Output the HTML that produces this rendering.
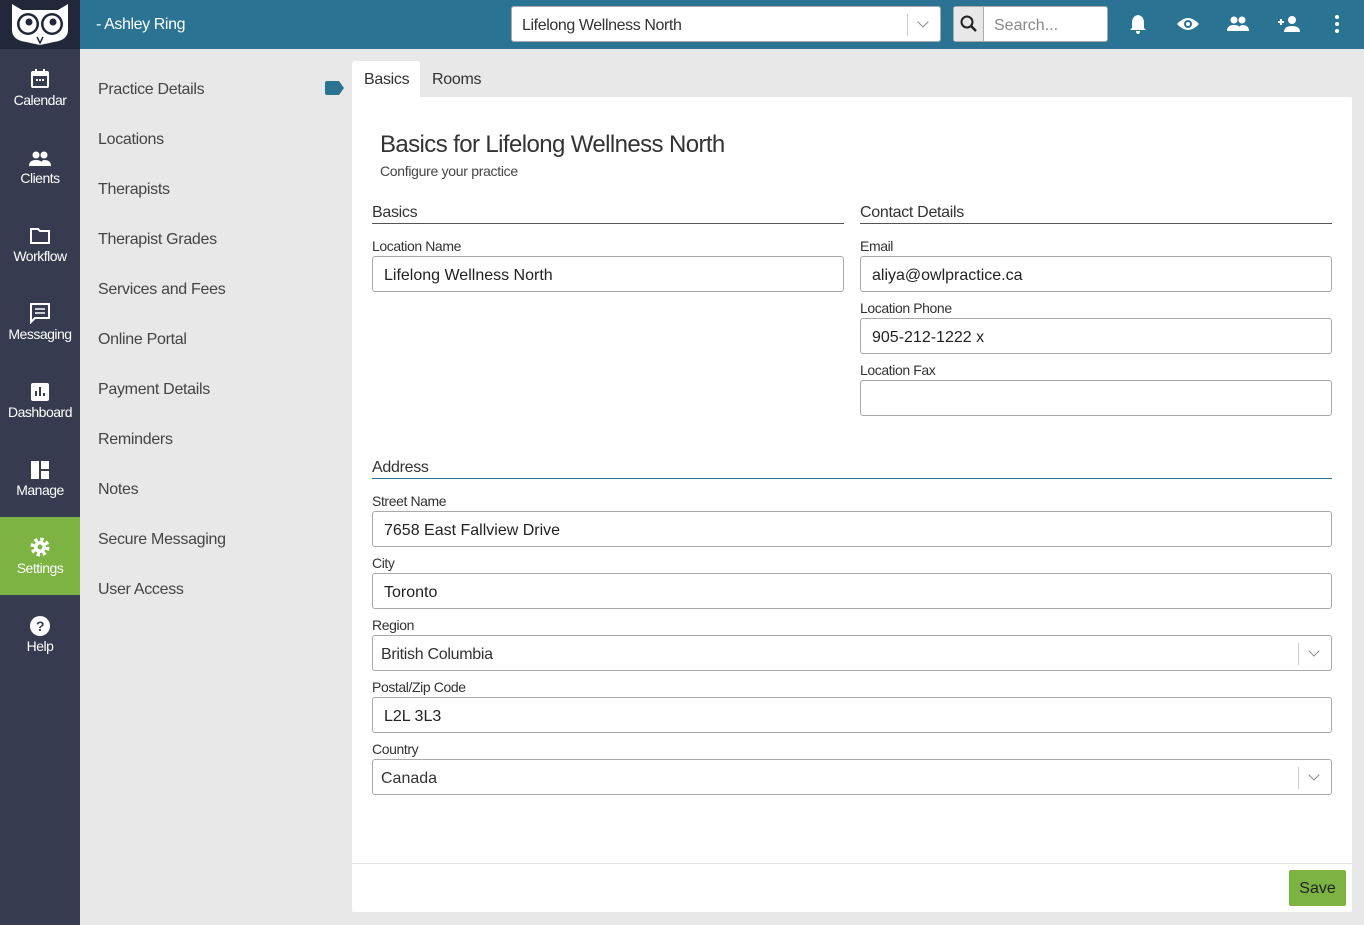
<!DOCTYPE html>
<html><head><meta charset="utf-8"><style>
*{box-sizing:border-box;margin:0;padding:0}
body{width:1364px;height:925px;background:#e8e8e8;font-family:"Liberation Sans",sans-serif;position:relative;overflow:hidden;color:#333}
.top{position:absolute;left:0;top:0;width:1364px;height:49px;background:#2a7393}
.logo{position:absolute;left:0;top:0;width:80px;height:49px;background:#22273a}
.side{position:absolute;left:0;top:49px;width:80px;height:876px;background:#363b4f}
.nav{position:absolute;left:0;width:80px;height:78px;color:#fff;font-size:14px;text-align:center;letter-spacing:-.5px;padding-top:2px}
.nav svg{display:block;margin:0 auto 2px}
.nav.act{background:#7cb342}
.menu{position:absolute;left:98px;font-size:16px;color:#444;letter-spacing:-.3px;margin-top:2px}
.panel{position:absolute;left:352px;top:97px;width:1000px;height:815px;background:#fff;border-radius:2px}
.lbl{position:absolute;font-size:14px;color:#333;letter-spacing:-.4px;margin-top:-1px}
.inp{position:absolute;height:36px;border:1px solid #aaa;border-radius:3px;background:#fff;font-size:16px;padding:10px 11px 0;color:#222}
.sec{position:absolute;font-size:16px;color:#333;border-bottom:1px solid #555;padding-bottom:1px;letter-spacing:-.3px;margin-top:1px}
.dd{position:absolute;right:0;top:7px;width:33px;height:22px;border-left:1px solid #ccc}
.dd:after{content:"";position:absolute;left:11px;top:4px;width:7px;height:7px;border-right:1.5px solid #888;border-bottom:1.5px solid #888;transform:rotate(45deg)}
.ic{position:absolute;top:13px}
</style></head><body>
<div class="top"></div>
<div class="logo"><svg width="80" height="49" viewBox="0 0 80 49"><path d="M12 4 L22 10 L58 10 L68 4 L68 30 Q68 40 54 42 L40 45 L26 42 Q12 40 12 30Z" fill="#fff"/><circle cx="28" cy="24" r="11" fill="#22273a"/><circle cx="52" cy="24" r="11" fill="#22273a"/><circle cx="28" cy="24" r="8.5" fill="#fff"/><circle cx="52" cy="24" r="8.5" fill="#fff"/><circle cx="29" cy="22" r="3.5" fill="#22273a"/><circle cx="53" cy="22" r="3.5" fill="#22273a"/><path d="M37 37 L40 43 L43 37" fill="none" stroke="#22273a" stroke-width="1.5"/></svg></div>
<div style="position:absolute;left:96px;top:16px;color:#fff;font-size:16px;letter-spacing:-.4px">- Ashley Ring</div>
<div style="position:absolute;left:511px;top:6px;width:430px;height:36px;background:#fff;border:1px solid #aaa;border-radius:3px;font-size:16px;padding:10px 10px 0;letter-spacing:-.4px">Lifelong Wellness North<div class="dd"></div></div>
<div style="position:absolute;left:953px;top:6px;width:155px;height:36px;background:#fff;border:1px solid #aaa;border-radius:3px"><div style="position:absolute;left:0;top:0;width:30px;height:34px;background:#e8e8e8;border-right:1px solid #aaa"><svg width="30" height="34"><circle cx="13" cy="15" r="5.5" fill="none" stroke="#222" stroke-width="2"/><path d="M17 19 L22 24" stroke="#222" stroke-width="2.5"/></svg></div><span style="position:absolute;left:40px;top:10px;color:#888;font-size:16px">Search...</span></div>
<svg class="ic" style="left:1128px" width="20" height="22"><path d="M10 2 Q4 3 4 10 L4 15 L2 17 L18 17 L16 15 L16 10 Q16 3 10 2Z M8 18 L12 18 Q12 21 10 21 Q8 21 8 18Z" fill="#fff"/></svg>
<svg class="ic" style="left:1176px" width="24" height="22"><path d="M1 11 Q12 -1 23 11 Q12 23 1 11Z" fill="#fff"/><circle cx="12" cy="11" r="4" fill="#2a7393"/><circle cx="12" cy="11" r="2" fill="#fff"/></svg>
<svg class="ic" style="left:1226px" width="24" height="22"><circle cx="8" cy="7" r="3.5" fill="#fff"/><circle cx="16" cy="7" r="3.5" fill="#fff"/><path d="M1 18 Q1 12 8 12 Q15 12 15 18Z M13 18 Q13 12 16 12 Q23 12 23 18Z" fill="#fff"/></svg>
<svg class="ic" style="left:1276px" width="26" height="22"><path d="M2 9 H8 M5 6 V12" stroke="#fff" stroke-width="2"/><circle cx="16" cy="7" r="4" fill="#fff"/><path d="M8 19 Q8 13 16 13 Q24 13 24 19Z" fill="#fff"/></svg>
<svg class="ic" style="left:1332px" width="10" height="22"><circle cx="5" cy="4" r="2" fill="#fff"/><circle cx="5" cy="11" r="2" fill="#fff"/><circle cx="5" cy="18" r="2" fill="#fff"/></svg>
<div class="side"></div>
<div class="nav" style="top:66px"><svg width="20" height="22"><rect x="2" y="4" width="16" height="15" rx="1" fill="none" stroke="#fff" stroke-width="2"/><rect x="2" y="4" width="16" height="4" fill="#fff"/><path d="M6 1v4M14 1v4" stroke="#fff" stroke-width="2"/><path d="M6 12h2M9 12h2M12 12h2" stroke="#fff" stroke-width="2"/></svg>Calendar</div>
<div class="nav" style="top:144px"><svg width="24" height="22"><circle cx="8" cy="9" r="3.5" fill="#fff"/><circle cx="16" cy="9" r="3.5" fill="#fff"/><path d="M1 20 Q1 14 8 14 Q15 14 15 20Z M13 20 Q13 14 16 14 Q23 14 23 20Z" fill="#fff"/></svg>Clients</div>
<div class="nav" style="top:222px"><svg width="22" height="22"><path d="M2 5 H9 L11 7 H20 V19 H2Z" fill="none" stroke="#fff" stroke-width="2"/></svg>Workflow</div>
<div class="nav" style="top:300px"><svg width="22" height="22"><path d="M2 2 H20 V16 H6 L2 20Z" fill="none" stroke="#fff" stroke-width="2"/><path d="M6 7h10M6 11h10" stroke="#fff" stroke-width="1.5"/></svg>Messaging</div>
<div class="nav" style="top:378px"><svg width="22" height="22"><rect x="2" y="3" width="18" height="18" rx="2" fill="#fff"/><path d="M7 16V11M11 16V7M15 16V13" stroke="#363b4f" stroke-width="2"/></svg>Dashboard</div>
<div class="nav" style="top:456px"><svg width="22" height="22"><rect x="2" y="3" width="8" height="18" fill="#fff"/><rect x="12" y="3" width="8" height="8" fill="#fff"/><rect x="12" y="13" width="8" height="8" fill="#fff"/></svg>Manage</div>
<div class="nav act" style="top:517px;height:78px;padding-top:19px"><svg width="22" height="22"><circle cx="11" cy="11" r="7" fill="none" stroke="#fff" stroke-width="5" stroke-dasharray="3 2.5"/><circle cx="11" cy="11" r="6" fill="#fff"/><circle cx="11" cy="11" r="2.5" fill="#7cb342"/></svg>Settings</div>
<div class="nav" style="top:612px"><svg width="22" height="22"><circle cx="11" cy="12" r="10" fill="#fff"/><text x="11" y="17" font-size="14" font-weight="bold" text-anchor="middle" fill="#363b4f" font-family="Liberation Sans">?</text></svg>Help</div>
<div class="menu" style="top:79px">Practice Details</div>
<svg style="position:absolute;left:325px;top:81px" width="20" height="15"><path d="M0 2 Q0 0 2 0 H14 L19 7 L14 14 H2 Q0 14 0 12Z" fill="#2a7393"/></svg>
<div class="menu" style="top:129px">Locations</div>
<div class="menu" style="top:179px">Therapists</div>
<div class="menu" style="top:229px">Therapist Grades</div>
<div class="menu" style="top:279px">Services and Fees</div>
<div class="menu" style="top:329px">Online Portal</div>
<div class="menu" style="top:379px">Payment Details</div>
<div class="menu" style="top:429px">Reminders</div>
<div class="menu" style="top:479px">Notes</div>
<div class="menu" style="top:529px">Secure Messaging</div>
<div class="menu" style="top:579px">User Access</div>
<div style="position:absolute;left:352px;top:61px;width:68px;height:37px;background:#fff;border-radius:3px 3px 0 0;font-size:16px;padding:10px 12px 0;letter-spacing:-.3px">Basics</div>
<div style="position:absolute;left:432px;top:71px;font-size:16px;letter-spacing:-.3px">Rooms</div>
<div class="panel"></div>
<div style="position:absolute;left:380px;top:131px;font-size:24px;color:#333;letter-spacing:-.6px">Basics for Lifelong Wellness North</div>
<div style="position:absolute;left:380px;top:163px;font-size:14px;color:#444;letter-spacing:-.3px">Configure your practice</div>
<div class="sec" style="left:372px;top:203px;width:472px">Basics</div>
<div class="sec" style="left:860px;top:203px;width:472px">Contact Details</div>
<div class="lbl" style="left:372px;top:239px">Location Name</div>
<div class="inp" style="left:372px;top:256px;width:472px">Lifelong Wellness North</div>
<div class="lbl" style="left:860px;top:239px">Email</div>
<div class="inp" style="left:860px;top:256px;width:472px">aliya@owlpractice.ca</div>
<div class="lbl" style="left:860px;top:301px">Location Phone</div>
<div class="inp" style="left:860px;top:318px;width:472px">905-212-1222 x</div>
<div class="lbl" style="left:860px;top:363px">Location Fax</div>
<div class="inp" style="left:860px;top:380px;width:472px"></div>
<div class="sec" style="left:372px;top:458px;width:960px;border-color:#2a7393">Address</div>
<div class="lbl" style="left:372px;top:494px">Street Name</div>
<div class="inp" style="left:372px;top:511px;width:960px">7658 East Fallview Drive</div>
<div class="lbl" style="left:372px;top:556px">City</div>
<div class="inp" style="left:372px;top:573px;width:960px">Toronto</div>
<div class="lbl" style="left:372px;top:618px">Region</div>
<div class="inp" style="left:372px;top:635px;width:960px;padding-left:8px;color:#333;letter-spacing:-.3px">British Columbia<div class="dd"></div></div>
<div class="lbl" style="left:372px;top:680px">Postal/Zip Code</div>
<div class="inp" style="left:372px;top:697px;width:960px">L2L 3L3</div>
<div class="lbl" style="left:372px;top:742px">Country</div>
<div class="inp" style="left:372px;top:759px;width:960px;padding-left:8px;color:#333">Canada<div class="dd"></div></div>
<div style="position:absolute;left:352px;top:863px;width:1000px;border-top:1px solid #e3e3e3"></div>
<div style="position:absolute;left:1289px;top:870px;width:57px;height:36px;background:#7cb342;border-radius:2px;color:#222;font-size:16px;text-align:center;line-height:37px">Save</div>
</body></html>
